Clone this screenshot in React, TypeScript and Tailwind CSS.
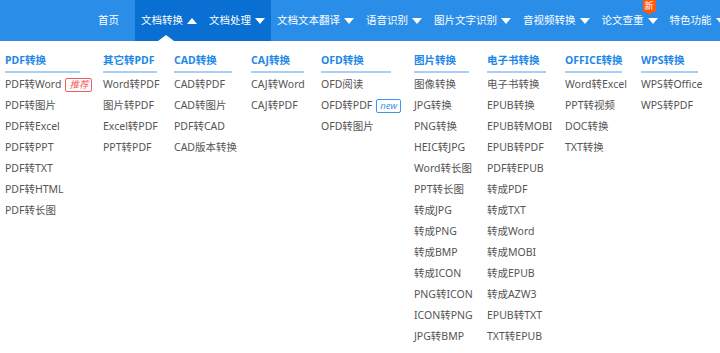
import React from 'react';

type Item = { label: string; tag?: 'hot' | 'new' };
type Column = { title: string; width: string; line: string; items: Item[] };

const navItems = [
  { label: '首页', caret: false },
  { label: '文档转换', caret: true, open: true },
  { label: '文档处理', caret: true, dark: true },
  { label: '文档文本翻译', caret: true },
  { label: '语音识别', caret: true },
  { label: '图片文字识别', caret: true },
  { label: '音视频转换', caret: true },
  { label: '论文查重', caret: true, badge: '新' },
  { label: '特色功能', caret: true },
];

const columns: Column[] = [
  {
    title: 'PDF转换',
    width: 'w-[98px]',
    line: 'w-[75px]',
    items: [
      { label: 'PDF转Word', tag: 'hot' },
      { label: 'PDF转图片' },
      { label: 'PDF转Excel' },
      { label: 'PDF转PPT' },
      { label: 'PDF转TXT' },
      { label: 'PDF转HTML' },
      { label: 'PDF转长图' },
    ],
  },
  {
    title: '其它转PDF',
    width: 'w-[71px]',
    line: 'w-[54px]',
    items: [{ label: 'Word转PDF' }, { label: '图片转PDF' }, { label: 'Excel转PDF' }, { label: 'PPT转PDF' }],
  },
  {
    title: 'CAD转换',
    width: 'w-[77px]',
    line: 'w-[58px]',
    items: [{ label: 'CAD转PDF' }, { label: 'CAD转图片' }, { label: 'PDF转CAD' }, { label: 'CAD版本转换' }],
  },
  {
    title: 'CAJ转换',
    width: 'w-[70px]',
    line: 'w-[53px]',
    items: [{ label: 'CAJ转Word' }, { label: 'CAJ转PDF' }],
  },
  {
    title: 'OFD转换',
    width: 'w-[93px]',
    line: 'w-[70px]',
    items: [{ label: 'OFD阅读' }, { label: 'OFD转PDF', tag: 'new' }, { label: 'OFD转图片' }],
  },
  {
    title: '图片转换',
    width: 'w-[73px]',
    line: 'w-[55px]',
    items: [
      { label: '图像转换' },
      { label: 'JPG转换' },
      { label: 'PNG转换' },
      { label: 'HEIC转JPG' },
      { label: 'Word转长图' },
      { label: 'PPT转长图' },
      { label: '转成JPG' },
      { label: '转成PNG' },
      { label: '转成BMP' },
      { label: '转成ICON' },
      { label: 'PNG转ICON' },
      { label: 'ICON转PNG' },
      { label: 'JPG转BMP' },
    ],
  },
  {
    title: '电子书转换',
    width: 'w-[78px]',
    line: 'w-[59px]',
    items: [
      { label: '电子书转换' },
      { label: 'EPUB转换' },
      { label: 'EPUB转MOBI' },
      { label: 'EPUB转PDF' },
      { label: 'PDF转EPUB' },
      { label: '转成PDF' },
      { label: '转成TXT' },
      { label: '转成Word' },
      { label: '转成MOBI' },
      { label: '转成EPUB' },
      { label: '转成AZW3' },
      { label: 'EPUB转TXT' },
      { label: 'TXT转EPUB' },
    ],
  },
  {
    title: 'OFFICE转换',
    width: 'w-[76px]',
    line: 'w-[57px]',
    items: [{ label: 'Word转Excel' }, { label: 'PPT转视频' }, { label: 'DOC转换' }, { label: 'TXT转换' }],
  },
  {
    title: 'WPS转换',
    width: 'w-[75px]',
    line: 'w-[57px]',
    items: [{ label: 'WPS转Office' }, { label: 'WPS转PDF' }],
  },
];

const Caret = ({ up }: { up?: boolean }) => (
  <svg width="10" height="6" viewBox="0 0 10 6" className="ml-[4px] shrink-0">
    <path d={up ? 'M0 6 L5 0 L10 6 Z' : 'M0 0 L10 0 L5 6 Z'} fill="#fff" />
  </svg>
);

export default function App() {
  return (
    <div
      className="w-[720px] h-[353px] bg-white overflow-hidden"
      style={{ fontFamily: '"Noto Sans", "Noto Sans CJK SC", sans-serif' }}
    >
      <nav className="h-[41px] bg-[#2a8ee9] flex items-stretch pl-[92px] text-white text-[10.5px] whitespace-nowrap">
        {navItems.map((n, i) => (
          <div
            key={n.label}
            className={
              'relative shrink-0 flex items-center px-[6px] ' +
              (i === 0 ? 'mr-[10px] ' : '') +
              (n.open || n.dark ? 'bg-[#0a6fd2]' : '')
            }
          >
            <span>{n.label}</span>
            {n.caret && <Caret up={n.open} />}
            {n.open && (
              <span className="absolute bottom-0 left-[23px] w-0 h-0 border-l-[8px] border-r-[8px] border-b-[6px] border-l-transparent border-r-transparent border-b-white" />
            )}
            {n.badge && (
              <span className="absolute top-0 left-[47px] flex flex-col items-center">
                <span className="bg-[#ff5a0a] text-white text-[9px] leading-[12px] px-[2px]">{n.badge}</span>
                <span className="w-0 h-0 border-l-[3px] border-r-[3px] border-t-[3px] border-l-transparent border-r-transparent border-t-[#ff5a0a]" />
              </span>
            )}
          </div>
        ))}
      </nav>

      <div className="flex pl-[5px] pt-[9px]">
        {columns.map((c) => (
          <div key={c.title} className={c.width + ' shrink-0'}>
            <div className="text-[10.5px] font-bold text-[#1e88e8] leading-[21px] whitespace-nowrap">{c.title}</div>
            <div className={c.line + ' h-[2px] bg-[#a9cff6]'} />
            <ul className="pt-[1px]">
              {c.items.map((it) => (
                <li key={it.label} className="flex items-center text-[10.5px] leading-[21px] text-[#555] whitespace-nowrap">
                  {it.label}
                  {it.tag === 'hot' && (
                    <span className="ml-[4px] border border-[#f25b5b] rounded-[2px] text-[#f25b5b] italic text-[9.5px] leading-[12px] px-[3px]">
                      推荐
                    </span>
                  )}
                  {it.tag === 'new' && (
                    <span className="ml-[4px] border border-[#3f95ee] rounded-[2px] text-[#3f95ee] italic text-[9.5px] leading-[12px] px-[3px]">
                      new
                    </span>
                  )}
                </li>
              ))}
            </ul>
          </div>
        ))}
      </div>
    </div>
  );
}
